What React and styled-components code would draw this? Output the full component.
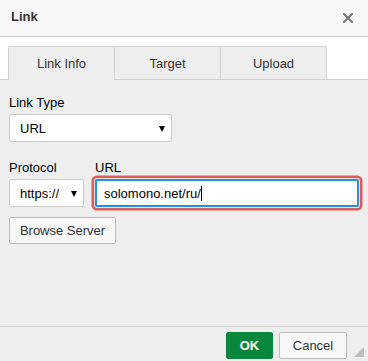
import React from "react";
import styled, { createGlobalStyle } from "styled-components";

const Global = createGlobalStyle`
  html, body { margin: 0; padding: 0; }
  body { font-family: "Liberation Sans", Arial, sans-serif; font-size: 13px; color: #333; }
`;

const Dialog = styled.div`
  width: 368px;
  height: 361px;
  display: flex;
  flex-direction: column;
  background: #eeeeee;
  overflow: hidden;
`;

const TitleBar = styled.div`
  height: 36px;
  flex: none;
  display: flex;
  align-items: center;
  justify-content: space-between;
  padding: 0 15px 0 11px;
  background: #f8f8f8;
  border-bottom: 1px solid #d1d1d1;
`;

const Title = styled.span`
  font-weight: bold;
  font-size: 13px;
  color: #333;
  margin-top: -3px;
`;

const Close = styled.button`
  border: 0;
  background: none;
  padding: 0;
  width: 10px;
  height: 10px;
  display: flex;
  margin-top: -1px;
`;

const TabsRow = styled.div`
  flex: none;
  display: flex;
  align-items: flex-end;
  padding: 9px 0 0 8px;
  background: #fff;
  border-bottom: 1px solid #d1d1d1;
`;

const Tab = styled.div`
  width: 107px;
  box-sizing: border-box;
  display: flex;
  align-items: center;
  justify-content: center;
  background: #eeeeee;
  border: 1px solid #d1d1d1;
  border-bottom: 0;
  margin-left: ${(p) => (p.$first ? "0" : "-1px")};
  border-radius: 2px 2px 0 0;
  color: #333;
  font-size: 13px;
  margin-bottom: ${(p) => (p.$active ? "-1px" : "0")};
  height: ${(p) => (p.$active ? "34px" : "33px")};
`;

const Content = styled.div`
  flex: 1;
  padding: 15px 9px 0 9px;
  display: flex;
  flex-direction: column;
`;

const Field = styled.div`
  display: flex;
  flex-direction: column;
  gap: 2px;
`;

const Label = styled.label`
  font-size: 13px;
  line-height: 16px;
  color: #000;
  height: 17px;
`;

const Select = styled.div`
  box-sizing: border-box;
  width: ${(p) => p.$w}px;
  height: 28px;
  background: #fff;
  border: 1px solid #c9c9c9;
  border-radius: 2px;
  display: flex;
  align-items: center;
  justify-content: space-between;
  padding: 0 6px 0 10px;
  font-size: 13px;
  color: #000;
`;

const Arrow = styled.span`
  width: 0;
  height: 0;
  border-left: 3.5px solid transparent;
  border-right: 3.5px solid transparent;
  border-top: 6px solid #000;
  margin-top: 1px;
`;

const Row = styled.div`
  display: flex;
  gap: 11px;
  margin-top: 18px;
`;

const UrlInput = styled.div`
  box-sizing: border-box;
  width: 264px;
  height: 28px;
  background: #fff;
  border: 2px solid #1f94dc;
  box-shadow: 0 0 0 1px #f6e0e0, 0 0 0 3.5px #df5c5c;
  display: flex;
  align-items: center;
  padding: 0 7px;
  font-size: 13px;
  color: #000;
  border-radius: 2px;
`;

const Caret = styled.span`
  display: inline-block;
  width: 1px;
  height: 15px;
  background: #000;
`;

const Button = styled.button`
  box-sizing: border-box;
  height: 27px;
  width: ${(p) => p.$w}px;
  font-family: "Liberation Sans", Arial, sans-serif;
  font-size: 13px;
  color: #333;
  background: #f8f8f8;
  border: 1px solid #bcbcbc;
  border-radius: 2px;
  padding: 0;
  align-self: flex-start;
  margin-top: ${(p) => p.$mt || 0}px;
  white-space: nowrap;
`;

const Footer = styled.div`
  flex: none;
  height: 35px;
  box-sizing: border-box;
  border-top: 1px solid #d1d1d1;
  display: flex;
  justify-content: flex-end;
  align-items: flex-start;
  padding: 5px 21px 0 0;
  gap: 6px;
  position: relative;
`;

const OkButton = styled.button`
  box-sizing: border-box;
  width: 47px;
  height: 27px;
  background: #09863e;
  border: 1px solid #09863e;
  border-radius: 2px;
  color: #fff;
  font-family: "Liberation Sans", Arial, sans-serif;
  font-weight: bold;
  font-size: 13px;
  padding: 0;
`;

const Grip = styled.svg`
  position: absolute;
  right: 4px;
  bottom: 4px;
`;

export default function App() {
  return (
    <>
      <Global />
      <Dialog>
        <TitleBar>
          <Title>Link</Title>
          <Close aria-label="Close">
            <svg width="10" height="10" viewBox="0 0 10 10">
              <path d="M1 1L9 9M9 1L1 9" stroke="#777" strokeWidth="2.2" strokeLinecap="square" />
            </svg>
          </Close>
        </TitleBar>
        <TabsRow>
          <Tab $first $active>Link Info</Tab>
          <Tab>Target</Tab>
          <Tab>Upload</Tab>
        </TabsRow>
        <Content>
          <Field>
            <Label>Link Type</Label>
            <Select $w={163}>
              <span>URL</span>
              <Arrow />
            </Select>
          </Field>
          <Row>
            <Field>
              <Label>Protocol</Label>
              <Select $w={75}>
                <span>https://</span>
                <Arrow />
              </Select>
            </Field>
            <Field>
              <Label>URL</Label>
              <UrlInput>
                <span>solomono.net/ru/</span>
                <Caret />
              </UrlInput>
            </Field>
          </Row>
          <Button $mt={10} $w={107}>Browse Server</Button>
        </Content>
        <Footer>
          <OkButton>OK</OkButton>
          <Button $w={68}>Cancel</Button>
          <Grip width="10" height="10" viewBox="0 0 10 10">
            <path d="M10 0L10 10L0 10Z" fill="#bdbdbd" />
          </Grip>
        </Footer>
      </Dialog>
    </>
  );
}
